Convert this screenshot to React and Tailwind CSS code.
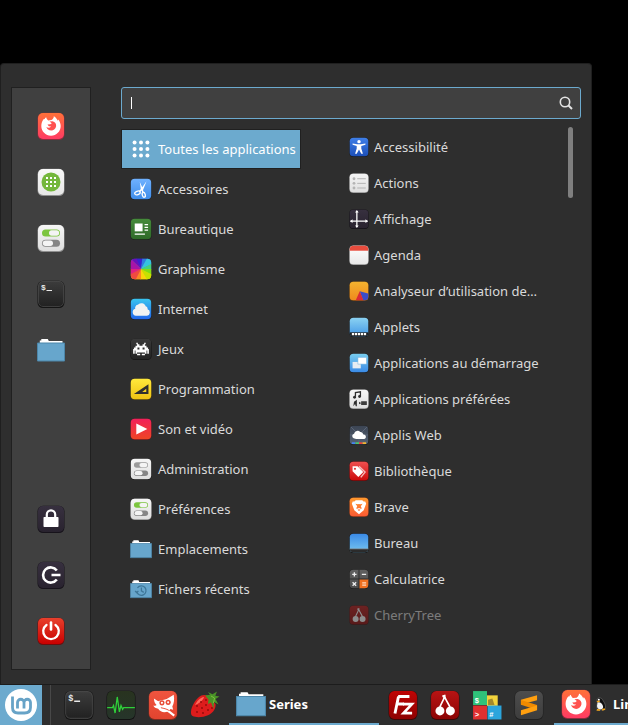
import { useState, useId } from "react";

// Rounded square that most of the icons sit on, drawn on a 28 unit grid
const Tile = ({ from, to, edge = "#1c1c1c", className = "size-7", children }) => {
  const id = useId();

  return (
    <svg viewBox="0 0 28 28" className={`shrink-0 ${className}`} aria-hidden="true">
      <defs>
        <linearGradient id={id} x1="0" y1="0" x2="0" y2="1">
          <stop offset="0" stopColor={from} />
          <stop offset="1" stopColor={to} />
        </linearGradient>
        <clipPath id={`${id}c`}>
          <rect x="1" y="1" width="26" height="26" rx="5" />
        </clipPath>
      </defs>
      <rect x="0.5" y="0.8" width="27" height="27.2" rx="5.5" fill={edge} />
      <rect x="1" y="1" width="26" height="26" rx="5" fill={`url(#${id})`} />
      <g clipPath={`url(#${id}c)`}>{children}</g>
    </svg>
  );
};

const FirefoxIcon = ({ className }) => (
  <Tile from="#ff7139" to="#ff3b63" edge="#8a2d3c" className={className}>
    <path
      fill="#fff"
      d="M7 6.800C5.300 8.600 4.300 11.200 4.300 14c0 5.400 4.300 9.700 9.700 9.700s9.700-4.300 9.700-9.700c0-2.500-1-4.900-2.500-6.500l-.3 1.300C20 6.800 18.600 5.200 16.800 4.200c.1 1.800-1.200 3-2.300 3.900l-3.300.3C10.200 7.600 9.400 6.600 9.200 5.300 8.400 5.700 7.800 6.400 7.600 7.300Z"
    />
    <path
      fill="#ff5250"
      d="M15.500 9.300c2.500.5 4 2.600 3.600 5-.4 2.500-2.400 4.300-4.900 4.300-2.300 0-4.300-1.500-4.800-3.600 1.500 1.100 3.400.9 4.700-.5l-2.300-.3-1.300-1.700 2.900-.2 1.400-1.100-2.300-1.700Z"
    />
  </Tile>
);

const AppsIcon = ({ className }) => (
  <Tile from="#f8f8f8" to="#e6e6e6" edge="#8f8f8f" className={className}>
    <circle cx="14" cy="14" r="9.5" fill="#74b73c" />
    {[9, 13, 17].map((y) =>
      [9, 13, 17].map((x) => <rect key={`${x}-${y}`} x={x} y={y} width="2" height="2" fill="#fff" />)
    )}
  </Tile>
);

const SwitchesIcon = ({ color = "#7cc53f", edge = "#8f8f8f", className }) => (
  <Tile from="#f6f6f6" to="#dedede" edge={edge} className={className}>
    <rect x="5" y="5.500" width="18" height="7" rx="3.500" fill={color} />
    <rect x="12" y="6.300" width="10.200" height="5.400" rx="2.700" fill="#f4f4f4" />
    <rect x="5" y="15.800" width="18" height="7" rx="3.500" fill="#858585" />
    <rect x="5.800" y="16.600" width="10.200" height="5.400" rx="2.700" fill="#f4f4f4" />
  </Tile>
);

const TerminalIcon = ({ className }) => (
  <Tile from="#3c3c3c" to="#212121" edge="#141414" className={className}>
    <rect x="1.500" y="1.500" width="25" height="25" rx="4.500" fill="none" stroke="#4a4a4a" strokeOpacity="0.700" />
    <text x="4" y="10" fontSize="8" fontWeight="bold" fill="#e8e8e8" fontFamily="Liberation Mono, monospace">
      $
    </text>
    <path d="M9.500 10.500H15" stroke="#e8e8e8" strokeWidth="1.200" />
  </Tile>
);

const FolderIcon = ({ className, recent }) => (
  <svg viewBox="0 0 28 28" className={`shrink-0 ${className}`} aria-hidden="true">
    <path d="M2.800 8V4.500h1.500V3h6.500l1 2H25.500v4H2.800Z" fill="#fff" />
    <path d="M0.500 7h27v18h-27Z" fill="#67a6cc" stroke="#4c86a9" />
    {recent && (
      <g fill="none" stroke="#3e7799" strokeWidth="1.600">
        <path d="M9.500 12.500a6 6 0 1 1 -1 4.500" />
        <path d="M14.500 12v4.300l3 2" />
        <path d="M6.500 16.500l2 2.200 2.200-2.200" />
      </g>
    )}
  </svg>
);

const LockIcon = ({ className }) => (
  <Tile from="#37303f" to="#29232f" edge="#17131b" className={className}>
    <path d="M9.800 13V9.500a4.200 4.200 0 0 1 8.400 0V13" fill="none" stroke="#fff" strokeWidth="2.200" />
    <rect x="6.500" y="12" width="15" height="10" rx="0.800" fill="#fff" />
  </Tile>
);

const LogoutIcon = ({ className }) => (
  <Tile from="#37303f" to="#29232f" edge="#17131b" className={className}>
    <path d="M19.800 9.500a7.600 7.600 0 1 0 0 9" fill="none" stroke="#fff" strokeWidth="2.600" />
    <path d="M14.500 14h9" stroke="#fff" strokeWidth="2.600" />
  </Tile>
);

const PowerIcon = ({ className }) => (
  <Tile from="#e8402c" to="#c90000" edge="#6d0d0d" className={className}>
    <path d="M9.500 8a7.800 7.800 0 1 0 9 0" fill="none" stroke="#fff" strokeWidth="2.300" strokeLinecap="round" />
    <path d="M14 5.500v7" stroke="#fff" strokeWidth="2.600" strokeLinecap="round" />
  </Tile>
);

const DotsIcon = ({ className }) => (
  <svg viewBox="0 0 28 28" className={`shrink-0 ${className}`} fill="#fff" aria-hidden="true">
    {[5, 14, 23].map((y) => [5, 14, 23].map((x) => <circle key={`${x}-${y}`} cx={x} cy={y} r="2.800" />))}
  </svg>
);

const ScissorsIcon = ({ className }) => (
  <Tile from="#6fb1ff" to="#3f8dea" className={className}>
    <path d="M21 4L16.500 15.500 13.500 14.500ZM12.500 5l4.500 10-3 1Z" fill="#fff" />
    <g fill="none" stroke="#fff" strokeWidth="1.700">
      <path d="M15 14l-3 3.500M15.500 15l1 3.500" />
      <ellipse cx="9.500" cy="19" rx="3.600" ry="2.200" transform="rotate(-20 9.500 19)" />
      <ellipse cx="17.500" cy="21.300" rx="1.900" ry="3.200" transform="rotate(-15 17.500 21.300)" />
    </g>
  </Tile>
);

const OfficeIcon = ({ className }) => (
  <Tile from="#458a3a" to="#2f6a29" className={className}>
    <rect x="6" y="7" width="10" height="10" fill="#fff" />
    <path d="M18.500 8.500H23M18.500 12H23M18.500 15.500H23M6 20.500h13" stroke="#fff" strokeWidth="1.600" />
  </Tile>
);

const GraphicsIcon = ({ className }) => (
  <Tile from="#3a49d8" to="#f4d000" className={className}>
    <path d="M14 14L-2 -2H8Z" fill="#6a10b8" />
    <path d="M14 14L7 -2H17Z" fill="#3a20d0" />
    <path d="M14 14L16 -2H24Z" fill="#2f7be0" />
    <path d="M14 14L23 -2H30V7Z" fill="#35c2e0" />
    <path d="M14 14L30 6V15Z" fill="#45d27e" />
    <path d="M14 14L30 14V23Z" fill="#80dc18" />
    <path d="M14 14L30 22V30H22Z" fill="#c8e000" />
    <path d="M14 14L23 30H13Z" fill="#fbd50a" />
    <path d="M14 14L14 30H5Z" fill="#fb8a24" />
    <path d="M14 14L6 30H-2V21Z" fill="#f04a40" />
    <path d="M14 14L-2 22V13Z" fill="#e02080" />
    <path d="M14 14L-2 14V-2Z" fill="#a814a8" />
  </Tile>
);

const CloudIcon = ({ className }) => (
  <Tile from="#39c4f0" to="#2367ea" className={className}>
    <path
      d="M7.500 22.500a4.500 4.500 0 0 1-.8-8.800 3.800 3.800 0 0 1 3.400-5 5.800 5.800 0 0 1 9.800 1.800c2.300.6 2.600 2.200 2.500 3.700a4.300 4.300 0 0 1-.8 8.300Z"
      fill="#f2f2f2"
    />
  </Tile>
);

const InvaderIcon = ({ className }) => (
  <Tile from="#3a3a3a" to="#232323" edge="#121212" className={className}>
    <path
      fill="#fff"
      fillRule="evenodd"
      d="M8 6h2v2h2v2h4V8h2V6h2v2h-1v2h2v2h2v2h1v6h-2v-4h-1v4h-2v2h-4v-2h4v-1.500H9V20h4v2H9v-2H7v-4H6v4H4v-6h1v-2h2v-2h2V8H8ZM9.500 12v2.500H12V12ZM16 12v2.500h2.500V12Z"
    />
  </Tile>
);

const SetSquareIcon = ({ className }) => (
  <Tile from="#ffe93c" to="#efc313" edge="#4a3d12" className={className}>
    <path d="M5 20.500L23.500 8v12.500ZM15.500 17.800h5.200v-4Z" fill="#2f2f2f" fillRule="evenodd" />
  </Tile>
);

const PlayIcon = ({ className }) => (
  <Tile from="#f2205a" to="#ee4524" edge="#5c1a22" className={className}>
    <path d="M8 7l14 7-14 7Z" fill="#fff" />
  </Tile>
);

const AccessibilityIcon = ({ className }) => (
  <Tile from="#3f7fe8" to="#1c4fb8" className={className}>
    <circle cx="14" cy="6.500" r="2.400" fill="#fff" />
    <path d="M5 9l6.500 1.300h5L23 9v2l-5.800 1.700V16l2.300 7.500h-2.300L14 17.500l-3.200 6H8.500L10.800 16v-3.300L5 11Z" fill="#fff" />
  </Tile>
);

const ActionsIcon = ({ className }) => (
  <Tile from="#f4f4f4" to="#dfdfdf" edge="#8f8f8f" className={className}>
    {[8, 14.500, 21].map((y) => (
      <g key={y} fill="#b4b4b4">
        <circle cx="7" cy={y} r="2" />
        <rect x="11.500" y={y - 0.700} width="12" height="1.400" />
      </g>
    ))}
  </Tile>
);

const DisplayIcon = ({ className }) => (
  <Tile from="#37303f" to="#29232f" edge="#121015" className={className}>
    <path d="M11 3v22M2 17h24" stroke="#fff" strokeWidth="1.800" />
    <path d="M11 1.500l2.500 3.500h-5ZM11 26.500l2.500-3.500h-5ZM1.500 17l3.500-2.500v5ZM26.500 17l-3.500-2.500v5Z" fill="#fff" />
  </Tile>
);

const CalendarIcon = ({ className }) => (
  <Tile from="#ffffff" to="#e8e8e8" edge="#8f8f8f" className={className}>
    <rect width="28" height="8" fill="#e84c3d" />
  </Tile>
);

const DiskUsageIcon = ({ className }) => (
  <Tile from="#f4b32f" to="#ef8a1d" edge="#5f3c14" className={className}>
    <path d="M15 14.500L28 18V28H20Z" fill="#3b4cc8" />
    <path d="M15 14.500L20.500 28H9Z" fill="#dc2b35" />
  </Tile>
);

const AppletsIcon = ({ className }) => (
  <Tile from="#8bd2f2" to="#4297e6" className={className}>
    <rect y="21.500" width="28" height="6" fill="#1f1f1f" />
    <path d="M4 24h20" stroke="#fff" strokeWidth="3" strokeDasharray="3.200 1" />
  </Tile>
);

const StartupIcon = ({ className }) => (
  <Tile from="#78cdef" to="#3a8ae6" className={className}>
    <rect x="5" y="12.500" width="11.500" height="9" fill="#e6ecf2" />
    <rect x="12.500" y="6" width="12" height="9.500" fill="#fff" stroke="#79b5df" strokeWidth="0.800" />
  </Tile>
);

const PreferredIcon = ({ className }) => (
  <Tile from="#f6f6f6" to="#dedede" edge="#8f8f8f" className={className}>
    <path d="M9 11V5l7-1v6.500" fill="none" stroke="#2d2d2d" strokeWidth="1.800" />
    <circle cx="7.800" cy="11.500" r="2" fill="#2d2d2d" />
    <circle cx="14.800" cy="10.500" r="2" fill="#2d2d2d" />
    <path d="M11 15v9H9.500l-1-3-2.500 3 1-6Z" fill="#2d2d2d" />
    <path d="M14 18l3 1.500V17h8v5.500h-8V20l-3 1.500Z" fill="#3d3d3d" />
  </Tile>
);

const WebAppsIcon = ({ className }) => (
  <Tile from="#3b4453" to="#566273" className={className}>
    <path d="M1 1l13 13L27 1M14 14v13M1 14h26" stroke="#606b7c" strokeWidth="1.200" fill="none" />
    <path d="M6.500 18.500a3.400 3.400 0 0 1 .6-6.400 5 5 0 0 1 8.600-2.300 4 4 0 0 1 4.300 3.500 3.200 3.200 0 0 1 1.500 6.200H10Z" fill="#fff" />
    <path d="M4 25.500h5" stroke="#4285f4" strokeWidth="2.400" />
    <path d="M9 25.500h5" stroke="#4ec36a" strokeWidth="2.400" />
    <path d="M14 25.500h5" stroke="#e8453c" strokeWidth="2.400" />
    <path d="M19 25.500h5" stroke="#f2b632" strokeWidth="2.400" />
  </Tile>
);

const LibraryIcon = ({ className }) => (
  <Tile from="#f05050" to="#cc0a0a" edge="#5e0c0c" className={className}>
    <path d="M14 7.500l8.500 8-6 7.500" fill="none" stroke="#f4b8b8" strokeWidth="2" />
    <path d="M5 7.500h7l8 8-7 7-8-8ZM8.300 9.300a1.500 1.500 0 1 0 .1 0Z" fill="#fff" fillRule="evenodd" />
  </Tile>
);

const BraveIcon = ({ className }) => (
  <Tile from="#ff9a2e" to="#fb5a33" edge="#7a3419" className={className}>
    <path
      d="M9.500 4.500h9l2 1.800h2.300l1.200 3-3.400 9.200L14 24l-6.600-5.500L4 9.300l1.200-3h2.300ZM9 9.500l2.500 3.500-1.500 3 1.500.6L14 15.300l2.500 1.300 1.500-.6-1.500-3L19 9.500l-3.500.8-1.500-.4-1.500.4ZM12 18l2 1.600 2-1.600-2-.8Z"
      fill="#fff"
      fillRule="evenodd"
    />
  </Tile>
);

const DesktopIcon = ({ className }) => (
  <Tile from="#3a8ae6" to="#78c6ef" edge="#121212" className={className}>
    <rect y="22" width="28" height="6" fill="#2b2b2b" />
    <path d="M0 22.300h28" stroke="#bdbdbd" strokeWidth="0.600" />
  </Tile>
);

const CalculatorIcon = ({ className }) => (
  <Tile from="#606060" to="#4c4c4c" className={className}>
    <rect x="14" y="14" width="14" height="14" fill="#f07020" />
    <path d="M14 0v28M0 14h28" stroke="#2c2c2c" strokeWidth="1.400" />
    <path d="M4.500 7.500h6M7.500 4.500v6M18 7.500h6M5 18.500l5 5M10 18.500l-5 5" stroke="#f0f0f0" strokeWidth="1.800" />
    <path d="M18.500 19.500h5.500M18.500 22.500h5.500" stroke="#ffd9bd" strokeWidth="1.800" />
  </Tile>
);

const CherryIcon = ({ className }) => (
  <Tile from="#b81414" to="#8c0404" edge="#3d0808" className={className}>
    <path d="M9 18c0-5 4-7 4.500-12.500M19 18c0-4.500-4-6.500-5.500-12.500M11.500 6l3-1" fill="none" stroke="#fff" strokeWidth="1.600" />
    <circle cx="9.300" cy="19.500" r="4.200" fill="#fff" />
    <circle cx="19" cy="19.500" r="4.200" fill="#fff" />
  </Tile>
);

const MonitorIcon = ({ className }) => (
  <Tile from="#28331f" to="#26352a" edge="#121212" className={className}>
    <path
      d="M1 16.500h5l1-2 1.500 7 2-15 2 14 1.500-6 1.500 3.500 1-1.500h10.500"
      fill="none"
      stroke="#2fd03a"
      strokeWidth="1.200"
    />
  </Tile>
);

const GimpIcon = ({ className }) => (
  <Tile from="#f0553f" to="#e2442f" edge="#7c2c20" className={className}>
    <path
      d="M5.500 8l4 2.500c3-.8 6-1.500 8-2L24 4.500c.8 4.500.3 8-1.300 11l.8 3-2.500-.8c-3 4.300-9 3.800-11.500-.2-2-.2-4-1.500-4.500-3 1.500.5 2.500.3 3-.5-2-1.500-2.300-3.800-2.500-6Z"
      fill="#fff"
    />
    <circle cx="13" cy="12" r="2.400" fill="#e84c37" />
    <circle cx="18.800" cy="11.500" r="2.400" fill="#e84c37" />
    <circle cx="13" cy="12" r="1" fill="#fff" />
    <circle cx="18.800" cy="11.500" r="1" fill="#fff" />
    <path d="M11 16.500c4 1.500 6 1.500 9 4l4.500 3.500" fill="none" stroke="#fff" strokeWidth="2" />
    <path d="M12 16.500c3 .8 5 1 7.500 2.500" fill="none" stroke="#e84c37" strokeWidth="0.900" />
  </Tile>
);

const StrawberryIcon = ({ className }) => (
  <svg viewBox="0 0 30 28" className={`shrink-0 ${className}`} aria-hidden="true">
    <path
      d="M17 4.500C12 2.500 7.500 6 4 12c-3.500 6-4 11.500-1.500 13 3.500 1.800 10.500 1.500 15.500-.8 5.500-2.600 8-6.700 7.500-11.200Z"
      fill="#dd1c1c"
    />
    <path d="M14 6c-4 .5-7 4-9 8 3-1 8-4 9-8Z" fill="#ff6a5c" />
    <g fill="#8f0a0a">
      {[[7, 15], [11, 11], [12, 17], [16, 14], [7, 21], [13, 22], [18, 19], [22, 17], [16, 9]].map(([x, y]) => (
        <circle key={`${x}-${y}`} cx={x} cy={y} r="0.900" />
      ))}
    </g>
    <path
      d="M15 4.500l5-.8L18 1l4.500 2.200L27 .5l-1.700 4.200 4.200.8-4 2.500 3 5.500-4.500-2.500-.5 7-2.500-6.500-3 1.500.5-4.500Z"
      fill="#4a9327"
    />
    <path d="M21 5l3.500 2-1 5" fill="none" stroke="#7cc13e" strokeWidth="1" />
  </svg>
);

const FileZillaIcon = ({ className }) => (
  <Tile from="#bf0404" to="#8e0202" edge="#3d0808" className={className}>
    <path d="M9.500 6H20M8.500 13H15M9.800 6L6.500 22" fill="none" stroke="#fff" strokeWidth="2.700" />
    <path d="M14 13.200h8.300L14.500 21.500h8" fill="none" stroke="#fff" strokeWidth="2.500" />
  </Tile>
);

const NotesIcon = ({ className }) => (
  <svg viewBox="0 0 28 28" className={`shrink-0 ${className}`} fontFamily="Liberation Sans, sans-serif" aria-hidden="true">
    <path d="M14 5h10v10H14Z" fill="#f2d33c" />
    <path d="M15 9l4-1 2 6h-6Z" fill="#a3892a" />
    <rect x="1" y="1" width="13" height="13" fill="#2fc27a" />
    <rect x="1" y="14.500" width="13" height="13" fill="#df3030" />
    <rect x="14.500" y="14.500" width="13" height="13" fill="#2ba5dc" />
    <g fill="#fff" fontSize="7" fontWeight="bold">
      <text x="2.500" y="12">$</text>
      <text x="2.500" y="25.500">&gt;</text>
      <text x="16" y="25.500">#</text>
    </g>
  </svg>
);

const SublimeIcon = ({ className }) => (
  <Tile from="#4d4d4d" to="#3d3d3d" edge="#212121" className={className}>
    <path d="M6.500 9L21.500 5v4.500L6.500 13.500Z" fill="#ff9f0f" />
    <path d="M6.500 9.300L21.500 14v4.600L6.500 13.800Z" fill="#f08a00" />
    <path d="M6.500 18.800L21.500 14.500v4.500L6.500 23.500Z" fill="#ff9f0f" />
  </Tile>
);

const PenguinIcon = ({ className }) => (
  <svg viewBox="0 0 12 14" className={`shrink-0 ${className}`} aria-hidden="true">
    <path d="M2 2.500C2.500.5 6 .3 7.200 2.200 8.500 4.500 11 7 10.500 11c-.2 1.500-2 2.200-4 2H3.500C1.500 12 1 9 2.500 6Z" fill="#111" stroke="#6b6b6b" strokeWidth="0.600" />
    <path d="M2.500 5.500C5 4.500 7 6.500 8 9c.4 2-.5 3.500-2.500 3.500S2 11 2 9Z" fill="#f4f4f4" />
    <circle cx="3.800" cy="2.800" r="1" fill="#fff" />
    <path d="M1.500 4l3-.5.5 1.300-2.400.8ZM2 12l3 .2v1.500H1.500ZM7 12l2.500-.8 1 1.500-3.200 1Z" fill="#f5a81c" />
  </svg>
);

const MintIcon = ({ className }) => (
  <svg viewBox="0 0 32 32" className={`shrink-0 ${className}`} aria-hidden="true">
    <circle cx="16" cy="16" r="16" fill="#fff" />
    <path
      d="M7.500 7.500V18.500Q7.500 24 13 24H19.500Q25.500 24 25.500 18.500V13.500a3.250 3.250 0 0 0-6.500 0V19.500M19 13.500a3.250 3.250 0 0 0-6.500 0V19.500"
      fill="none"
      stroke="#67a3c7"
      strokeWidth="2.800"
    />
  </svg>
);

const SearchIcon = () => (
  <svg viewBox="0 0 14 14" className="size-3.5 shrink-0" fill="none" stroke="#e4e4e4" strokeWidth="1.600" aria-hidden="true">
    <circle cx="6" cy="6" r="4.700" />
    <path d="M9.500 9.500l3.500 3.500" strokeWidth="2" />
  </svg>
);

const favorites = [
  { name: "Firefox", Icon: FirefoxIcon },
  { name: "Logithèque", Icon: AppsIcon },
  { name: "Paramètres système", Icon: SwitchesIcon },
  { name: "Terminal", Icon: TerminalIcon },
  { name: "Fichiers", Icon: FolderIcon },
];

const sessionActions = [
  { name: "Verrouiller l'écran", Icon: LockIcon },
  { name: "Déconnexion", Icon: LogoutIcon },
  { name: "Éteindre", Icon: PowerIcon },
];

const categories = [
  { name: "Toutes les applications", Icon: DotsIcon, iconClass: "size-5" },
  { name: "Accessoires", Icon: ScissorsIcon },
  { name: "Bureautique", Icon: OfficeIcon },
  { name: "Graphisme", Icon: GraphicsIcon },
  { name: "Internet", Icon: CloudIcon },
  { name: "Jeux", Icon: InvaderIcon },
  { name: "Programmation", Icon: SetSquareIcon },
  { name: "Son et vidéo", Icon: PlayIcon },
  { name: "Administration", Icon: (props) => <SwitchesIcon color="#9a9a9a" edge="#111111" {...props} /> },
  { name: "Préférences", Icon: SwitchesIcon },
  { name: "Emplacements", Icon: FolderIcon },
  { name: "Fichers récents", Icon: (props) => <FolderIcon recent {...props} /> },
];

const applications = [
  { name: "Accessibilité", Icon: AccessibilityIcon },
  { name: "Actions", Icon: ActionsIcon },
  { name: "Affichage", Icon: DisplayIcon },
  { name: "Agenda", Icon: CalendarIcon },
  { name: "Analyseur d’utilisation de…", Icon: DiskUsageIcon },
  { name: "Applets", Icon: AppletsIcon },
  { name: "Applications au démarrage", Icon: StartupIcon },
  { name: "Applications préférées", Icon: PreferredIcon },
  { name: "Applis Web", Icon: WebAppsIcon },
  { name: "Bibliothèque", Icon: LibraryIcon },
  { name: "Brave", Icon: BraveIcon },
  { name: "Bureau", Icon: DesktopIcon },
  { name: "Calculatrice", Icon: CalculatorIcon },
  { name: "CherryTree", Icon: CherryIcon, faded: true },
];

const launchers = [
  { name: "Terminal", Icon: TerminalIcon },
  { name: "Moniteur système", Icon: MonitorIcon },
  { name: "GIMP", Icon: GimpIcon },
  { name: "Strawberry", Icon: StrawberryIcon },
];

const pinned = [
  { name: "FileZilla", Icon: FileZillaIcon },
  { name: "CherryTree", Icon: CherryIcon },
  { name: "Notes", Icon: NotesIcon },
  { name: "Sublime Text", Icon: SublimeIcon },
];

const SidebarButton = ({ name, Icon }) => (
  <button aria-label={name} className="flex h-14 w-full items-center justify-center">
    <Icon className="size-7" />
  </button>
);

const TaskbarButton = ({ name, Icon }) => (
  <button aria-label={name} className="flex w-[42px] shrink-0 items-center justify-center">
    <Icon className="size-[30px]" />
  </button>
);

const Menu = () => {
  const [query, setQuery] = useState("");
  const [selected, setSelected] = useState("Toutes les applications");

  return (
    <div className="mr-9 flex rounded-t-sm border border-b-0 border-[#1f1f1f] bg-[#2e2e2e] pt-[23px] pr-2.5 pb-3.5 pl-2.5">
      <nav className="flex w-20 shrink-0 flex-col justify-between border border-[#202020] bg-[#404040] py-2.5">
        <div>
          {favorites.map((item) => (
            <SidebarButton key={item.name} {...item} />
          ))}
        </div>
        <div>
          {sessionActions.map((item) => (
            <SidebarButton key={item.name} {...item} />
          ))}
        </div>
      </nav>

      <div className="ml-[30px] min-w-0 flex-1 pb-[37px]">
        <label className="flex h-8 items-center rounded-[3px] border border-[#6caace] bg-[#404040] pr-[7px] pl-[9px]">
          {query === "" && <span className="h-3 w-px bg-white" />}
          <input
            type="text"
            aria-label="Rechercher"
            value={query}
            onChange={(e) => setQuery(e.target.value)}
            className="min-w-0 flex-1 bg-transparent text-white outline-none"
          />
          <SearchIcon />
        </label>

        <div className="mt-2.5 flex">
          <ul className="w-[180px] shrink-0">
            {categories.map(({ name, Icon, iconClass = "size-[22px]" }) => (
              <li key={name}>
                <button
                  onClick={() => setSelected(name)}
                  className={`flex h-10 w-full items-center gap-1.5 border pl-2 whitespace-nowrap ${
                    selected === name ? "border-[#202020] bg-[#6caace] text-white" : "border-transparent"
                  }`}
                >
                  <span className="flex w-[22px] shrink-0 justify-center">
                    <Icon className={iconClass} />
                  </span>
                  {name}
                </button>
              </li>
            ))}
          </ul>

          <ul className="ml-10 min-w-0 flex-1">
            {applications.map(({ name, Icon, faded }) => (
              <li key={name}>
                <button
                  className={`flex h-9 w-full items-center gap-[5px] pl-2 whitespace-nowrap ${faded ? "opacity-45" : ""}`}
                >
                  <Icon className="size-5" />
                  {name}
                </button>
              </li>
            ))}
          </ul>

          <div className="-mt-0.5 mr-2 w-[5px] shrink-0">
            <div className="h-[71px] rounded-full bg-[#7f7f7f]" />
          </div>
        </div>
      </div>
    </div>
  );
};

const Taskbar = () => (
  <div className="flex h-[41px] overflow-hidden border-t border-[#1c1c1c] bg-[#2e2e2e]">
    <button aria-label="Menu" className="flex w-[42px] shrink-0 items-center justify-center bg-[#6caace]">
      <MintIcon className="size-8" />
    </button>
    <div className="mr-[7px] ml-2 w-px shrink-0 bg-[#484848]" />
    {launchers.map((item) => (
      <TaskbarButton key={item.name} {...item} />
    ))}
    <button className="mx-[3px] flex w-[150px] shrink-0 items-center gap-[3px] border-b-2 border-[#6caace] pl-[7px] font-bold text-white">
      <FolderIcon className="size-[30px]" />
      Series
    </button>
    {pinned.map((item) => (
      <TaskbarButton key={item.name} {...item} />
    ))}
    <button className="ml-1 flex min-w-0 flex-1 items-center overflow-hidden border-b-2 border-[#6caace] pl-[7px] font-bold whitespace-nowrap text-white">
      <FirefoxIcon className="size-[30px]" />
      <PenguinIcon className="mr-1.5 ml-1 h-3.5 w-3" />
      <span>Lin</span>
    </button>
  </div>
);

const App = () => {
  return (
    <div className="flex min-h-screen flex-col justify-end overflow-hidden bg-black font-['Noto_Sans',sans-serif] text-[13px] leading-5 text-[#dadada]">
      <Menu />
      <Taskbar />
    </div>
  );
};

export default App;
